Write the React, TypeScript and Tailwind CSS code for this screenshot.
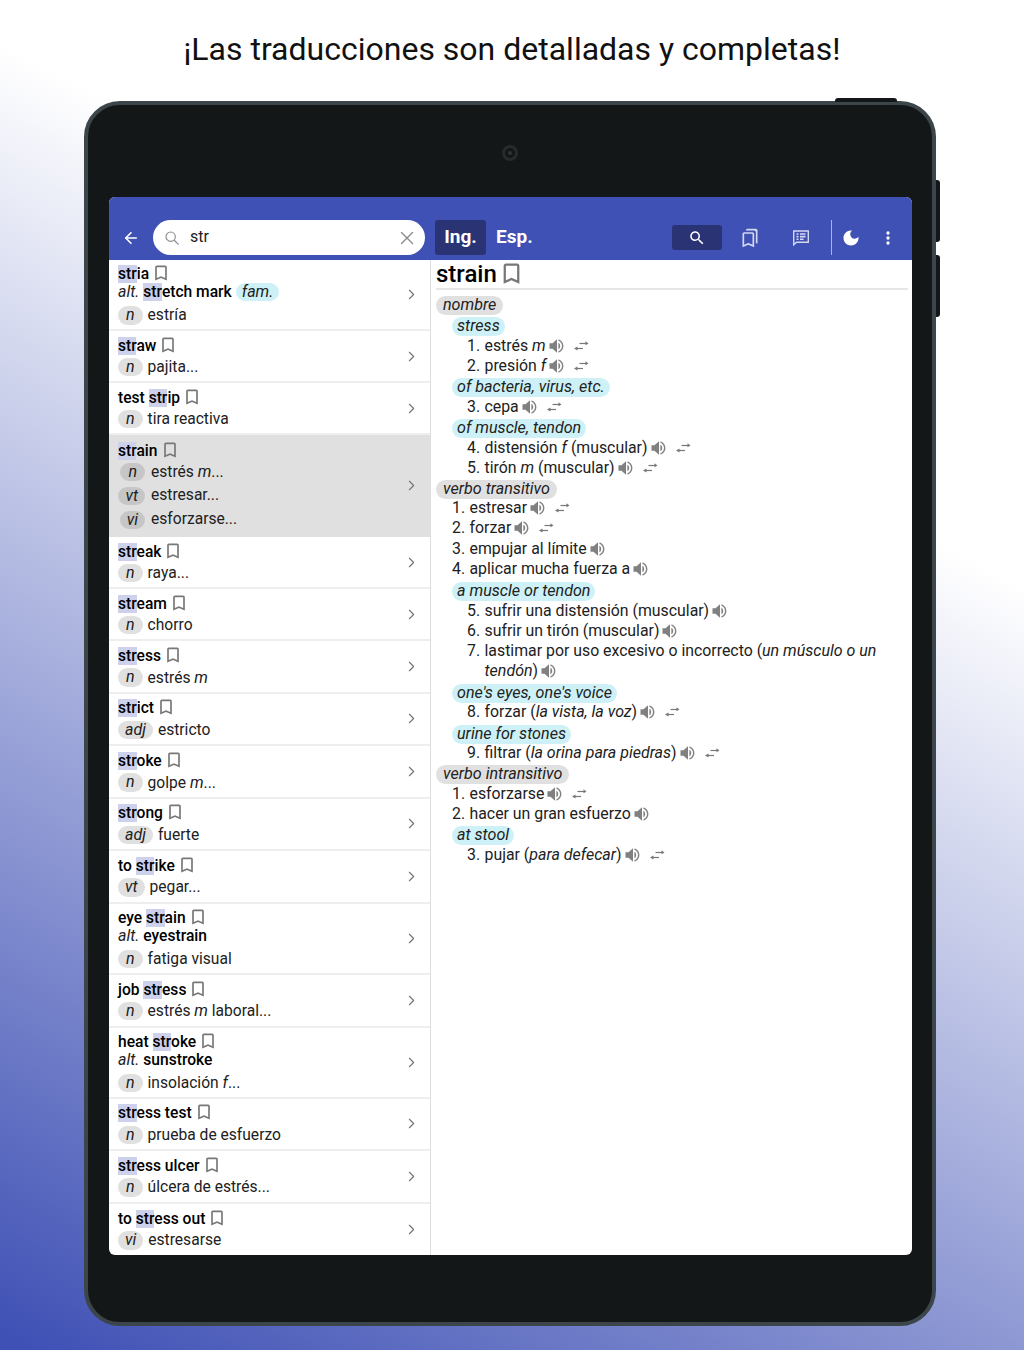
import React from 'react';
import { ArrowLeft, ChevronRight, X } from 'lucide-react';

interface Def {
  pos: string;
  text: React.ReactNode;
}

interface Row {
  before?: string;
  hit: string;
  after?: string;
  alt?: React.ReactNode;
  tag?: string;
  defs: Def[];
  selected?: boolean;
  height: string;
}

const Hl = ({ children }: { children: React.ReactNode }) => (
  <span className="bg-[#cdd1ec]">{children}</span>
);

const Em = ({ children }: { children: React.ReactNode }) => (
  <i className="text-[16px]">{children}</i>
);

const rows: Row[] = [
  { hit: 'str', after: 'ia', alt: <><Hl>str</Hl>etch mark</>, tag: 'fam.', defs: [{ pos: 'n', text: 'estría' }], height: 'h-[71px]' },
  { hit: 'str', after: 'aw', defs: [{ pos: 'n', text: 'pajita...' }], height: 'h-[52px]' },
  { before: 'test ', hit: 'str', after: 'ip', defs: [{ pos: 'n', text: 'tira reactiva' }], height: 'h-[52px]' },
  {
    hit: 'str',
    after: 'ain',
    selected: true,
    defs: [
      { pos: 'n', text: <>estrés <Em>m</Em>...</> },
      { pos: 'vt', text: 'estresar...' },
      { pos: 'vi', text: 'esforzarse...' },
    ],
    height: 'h-[102px]',
  },
  { hit: 'str', after: 'eak', defs: [{ pos: 'n', text: 'raya...' }], height: 'h-[52px]' },
  { hit: 'str', after: 'eam', defs: [{ pos: 'n', text: 'chorro' }], height: 'h-[52px]' },
  { hit: 'str', after: 'ess', defs: [{ pos: 'n', text: <>estrés <Em>m</Em></> }], height: 'h-[52.5px]' },
  { hit: 'str', after: 'ict', defs: [{ pos: 'adj', text: 'estricto' }], height: 'h-[52.5px]' },
  { hit: 'str', after: 'oke', defs: [{ pos: 'n', text: <>golpe <Em>m</Em>...</> }], height: 'h-[52.5px]' },
  { hit: 'str', after: 'ong', defs: [{ pos: 'adj', text: 'fuerte' }], height: 'h-[52.5px]' },
  { before: 'to ', hit: 'str', after: 'ike', defs: [{ pos: 'vt', text: 'pegar...' }], height: 'h-[52.5px]' },
  { before: 'eye ', hit: 'str', after: 'ain', alt: 'eyestrain', defs: [{ pos: 'n', text: 'fatiga visual' }], height: 'h-[71px]' },
  { before: 'job ', hit: 'str', after: 'ess', defs: [{ pos: 'n', text: <>estrés <Em>m</Em> laboral...</> }], height: 'h-[53px]' },
  { before: 'heat ', hit: 'str', after: 'oke', alt: 'sunstroke', defs: [{ pos: 'n', text: <>insolación <Em>f</Em>...</> }], height: 'h-[71px]' },
  { hit: 'str', after: 'ess test', defs: [{ pos: 'n', text: 'prueba de esfuerzo' }], height: 'h-[52.5px]' },
  { hit: 'str', after: 'ess ulcer', defs: [{ pos: 'n', text: 'úlcera de estrés...' }], height: 'h-[52.5px]' },
  { before: 'to ', hit: 'str', after: 'ess out', defs: [{ pos: 'vi', text: 'estresarse' }], height: 'h-[52px]' },
];

function BookmarkIcon({ className }: { className: string }) {
  return (
    <svg viewBox="0 0 24 24" className={className} fill="currentColor">
      <path d="M17 3H7c-1.1 0-2 .9-2 2v16l7-3 7 3V5c0-1.1-.9-2-2-2zm0 15l-5-2.18L7 18V5h10v13z" />
    </svg>
  );
}

function Speaker() {
  return (
    <svg viewBox="0 0 16 16" className="inline-block w-[16px] h-[16px] ml-[3px] align-[-3px] text-[#808080]" fill="currentColor">
      <path d="M0.5 5.2v5.6h3l4.5 4V1.2L3.500 5.200h-3z" />
      <path d="M9.400 4.800c1.100.6 1.800 1.800 1.800 3.200s-.7 2.600-1.800 3.200V4.800z" />
      <path d="M9.400 1.400v1.400c2.100.6 3.600 2.700 3.600 5.200s-1.500 4.600-3.600 5.200v1.400c2.900-.6 5-3.400 5-6.600s-2.100-6-5-6.600z" />
    </svg>
  );
}

function Swap() {
  return (
    <svg viewBox="0 0 16 16" className="inline-block w-4 h-4 align-[-3px] ml-[8px] text-[#777777]" fill="none" stroke="currentColor" strokeWidth="1.2">
      <path d="M6.500 5.500h6.500" />
      <path d="M12.500 3.300l3 2.200-3 1.700z" fill="currentColor" stroke="none" />
      <path d="M10 10.500H4" />
      <path d="M4.500 8.500l-3.500 2 3.500 2z" fill="currentColor" stroke="none" />
    </svg>
  );
}

function Pos({ children }: { children: React.ReactNode }) {
  return (
    <div className="h-[19.9px] pt-[1.4px]">
      <span className="block w-fit h-[19px] leading-[18.5px] rounded-full bg-[#e0e0e0] px-[7px] italic text-[16.100px] text-[#212121]">{children}</span>
    </div>
  );
}

function Sense({ children }: { children: React.ReactNode }) {
  return (
    <div className="h-[20.8px] pl-[16px] pt-[2.4px]">
      <span className="block w-fit h-[19px] leading-[18.5px] rounded-full bg-[#cdf1f6] px-[5px] italic text-[16.100px] text-[#212121]">{children}</span>
    </div>
  );
}

function Item({ n, deep, sound = true, swap, children }: {
  n: number;
  deep?: boolean;
  sound?: boolean;
  swap?: boolean;
  children: React.ReactNode;
}) {
  return (
    <div className={`flex leading-[20.2px] text-[15.85px] text-[#212121] ${deep ? 'pl-[31px]' : 'pl-[16px]'}`}>
      <span className="w-[17.5px] shrink-0">{n}.</span>
      <div>
        {children}
        {sound ? <Speaker /> : null}
        {swap ? <Swap /> : null}
      </div>
    </div>
  );
}

function ListRow({ row }: { row: Row }) {
  const multi = row.defs.length > 1;
  return (
    <div className={`flex items-center pl-[9px] pr-[10px] border-b-2 text-[15.6px] ${row.height} ${row.selected ? 'bg-[#e0e0e0] border-[#e0e0e0]' : 'border-[#eeeeee] last:border-b-0'}`}>
      <div className="flex-1 min-w-0 pt-[1px]">
        <div className="h-[18px] leading-[18px] font-medium text-black whitespace-nowrap">
          {row.before}
          <Hl>{row.hit}</Hl>
          {row.after}
          <BookmarkIcon className="inline-block w-[20px] h-[20px] ml-[2px] align-[-4px] text-[#777777]" />
        </div>
        {row.alt ? (
          <div className="mt-[2px] h-[18px] leading-[18px] whitespace-nowrap font-medium text-black">
            <i className="font-normal text-[16px] text-[#212121]">alt.</i> {row.alt}
            {row.tag ? (
              <span className="inline-block h-[18px] leading-[18px] ml-[4px] px-[6px] rounded-full bg-[#cdf1f6] italic font-normal text-[16px] text-[#212121]">{row.tag}</span>
            ) : null}
          </div>
        ) : null}
        <div className={multi ? 'mt-[2px]' : ''}>
          {row.defs.map((def) => (
            <div key={def.pos} className={`flex items-center text-[#212121] whitespace-nowrap ${multi ? 'h-[24px] pt-[1px]' : 'h-[26px] pt-[4px]'}`}>
              <span className={multi ? 'w-[27px] flex justify-end mr-[6px]' : 'mr-[5px]'}>
                <span className={`inline-block h-[18.5px] leading-[18px] rounded-full italic text-[16px] ${row.selected ? 'bg-[#c6c6c6]' : 'bg-[#e0e0e0]'} ${def.pos === 'n' ? 'px-[8px]' : 'px-[7px]'}`}>{def.pos}</span>
              </span>
              <span>{def.text}</span>
            </div>
          ))}
        </div>
      </div>
      <ChevronRight className="w-[17px] h-[17px] text-[#757575]" strokeWidth={1.6} />
    </div>
  );
}

export default function App() {
  return (
    <div className="relative h-[1350px] w-[1024px] overflow-hidden font-[Roboto,sans-serif] text-[16px] bg-[linear-gradient(28deg,#3f51b5_1%,#ffffff_69%)]">
      <h1 className="pt-[29px] h-[101px] text-center text-[32px] leading-[40px] text-[#111111]">
        ¡Las traducciones son detalladas y completas!
      </h1>

      {/* Tablet */}
      <div className="relative ml-[84px] w-[852px] h-[1225px] rounded-[36px] border-4 border-[#3c4549] bg-[#131718] px-[21px] pt-[92px]">
        <div className="absolute -top-[7px] left-[747px] w-[62px] h-[4px] rounded-t-[3px] bg-[#131718]" />
        <div className="absolute -right-[8px] top-[75px] w-[4px] h-[62px] rounded-r-[3px] bg-[#131718]" />
        <div className="absolute -right-[8px] top-[150px] w-[4px] h-[62px] rounded-r-[3px] bg-[#131718]" />
        <div className="absolute left-[414px] top-[40px] w-[16px] h-[16px] rounded-full border-[3px] border-[#262b2d] flex items-center justify-center">
          <div className="w-[4px] h-[4px] rounded-full bg-[#2f3638]" />
        </div>

        <div className="w-[803px] h-[1058px] rounded-[6px] overflow-hidden bg-white flex flex-col">
          {/* App bar */}
          <div className="h-[63px] shrink-0 bg-[#3f51b5] flex items-end pb-[5px] text-white">
            <div className="w-[44px] h-[35px] flex items-center justify-center">
              <ArrowLeft className="w-[18px] h-[18px]" strokeWidth={2.2} />
            </div>
            <div className="w-[272px] h-[35px] rounded-full bg-white flex items-center pl-[11px] pr-[7px] text-[#212121]">
              <svg viewBox="0 0 24 24" className="w-[16px] h-[16px] text-[#8a8a8a]" fill="none" stroke="currentColor" strokeWidth="1.7">
                <circle cx="10" cy="10" r="7" />
                <path d="M15 15l7 7" />
              </svg>
              <span className="ml-[10px] flex-1 leading-[34px] h-[35px]">str</span>
              <X className="w-[22px] h-[22px] text-[#8a8a8a]" strokeWidth={1.5} />
            </div>
            <div className="ml-[10px] w-[51px] h-[35px] rounded-[3px] bg-[#2a3374] flex items-center justify-center text-[19px] font-bold">Ing.</div>
            <div className="ml-[10px] w-[37px] h-[35px] flex items-center text-[19px] font-bold">Esp.</div>
            <div className="ml-[139px] mb-[5px] w-[50px] h-[25px] rounded-[3px] bg-[#2a3374] flex items-center justify-center">
              <svg viewBox="0 0 24 24" className="w-[18px] h-[18px]" fill="currentColor">
                <path d="M15.5 14h-.79l-.28-.27C15.41 12.59 16 11.11 16 9.5 16 5.91 13.09 3 9.5 3S3 5.91 3 9.5 5.91 16 9.5 16c1.61 0 3.09-.59 4.23-1.57l.27.28v.79l5 4.99L20.49 19l-4.99-5zm-6 0C7.01 14 5 11.99 5 9.5S7.01 5 9.5 5 14 7.01 14 9.5 11.99 14 9.5 14z" />
              </svg>
            </div>
            <div className="ml-[18px] w-[20px] h-[35px] flex items-center justify-center">
              <svg viewBox="0 0 24 24" className="w-[20px] h-[20px] text-[#d5d9f0]" fill="currentColor">
                <path d="M15 7v12.97l-4.21-1.81-.79-.34-.79.34L5 19.97V7h10m4-6H8.99C7.89 1 7 1.9 7 3h10c1.1 0 2 .9 2 2v13l2 1V3c0-1.1-.9-2-2-2zm-4 4H5c-1.1 0-2 .9-2 2v16l7-3 7 3V7c0-1.1-.9-2-2-2z" />
              </svg>
            </div>
            <div className="ml-[31px] w-[20px] h-[35px] flex items-center justify-center">
              <svg viewBox="0 0 20 20" className="w-[20px] h-[20px] text-[#d5d9f0]" fill="none" stroke="currentColor" strokeWidth="1.4">
                <path d="M2.7 3h14.600v11.200H5.600l-2.900 2.600z" />
                <path d="M5.500 6h2M5.500 8.600h2M5.500 11.200h2" strokeWidth="1.6" />
                <path d="M9 6h5.500M9 8.600h5.500M9 11.200h3.500" strokeWidth="1.6" />
              </svg>
            </div>
            <div className="ml-[20px] w-px h-[35px] bg-[#aab2df]" />
            <div className="ml-[8px] w-[22px] h-[35px] flex items-center justify-center">
              <svg viewBox="0 0 24 24" className="w-[20px] h-[20px]" fill="currentColor">
                <path d="M12 3c-4.97 0-9 4.03-9 9s4.03 9 9 9 9-4.03 9-9c0-.46-.04-.92-.1-1.36-.98 1.37-2.58 2.26-4.4 2.26-2.98 0-5.4-2.42-5.4-5.4 0-1.81.89-3.42 2.26-4.4-.44-.06-.9-.1-1.36-.1z" />
              </svg>
            </div>
            <div className="ml-[15px] w-[22px] h-[35px] flex items-center justify-center">
              <svg viewBox="0 0 24 24" className="w-[20px] h-[20px]" fill="currentColor">
                <circle cx="12" cy="6" r="2" />
                <circle cx="12" cy="12" r="2" />
                <circle cx="12" cy="18" r="2" />
              </svg>
            </div>
          </div>

          <div className="flex flex-1 min-h-0">
            {/* Results list */}
            <div className="w-[322px] shrink-0 border-r border-[#dddddd]">
              {rows.map((row) => (
                <ListRow key={`${row.before ?? ''}${row.after}`} row={row} />
              ))}
            </div>

            {/* Entry */}
            <div className="flex-1 pl-[5px] pr-[4px] pt-[1px]">
              <div className="h-[29px] flex items-center border-b-2 border-[#e6e6e6] pb-[2px] text-[24px] font-medium text-black">
                strain
                <BookmarkIcon className="w-[27px] h-[27px] ml-[1px] text-[#777777]" />
              </div>
              <div className="pt-[5px]">
                <Pos>nombre</Pos>
                <Sense>stress</Sense>
                <Item n={1} deep swap>estrés <Em>m</Em></Item>
                <Item n={2} deep swap>presión <Em>f</Em></Item>
                <Sense>of bacteria, virus, etc.</Sense>
                <Item n={3} deep swap>cepa</Item>
                <Sense>of muscle, tendon</Sense>
                <Item n={4} deep swap>distensión <Em>f</Em> (muscular)</Item>
                <Item n={5} deep swap>tirón <Em>m</Em> (muscular)</Item>
                <Pos>verbo transitivo</Pos>
                <Item n={1} swap>estresar</Item>
                <Item n={2} swap>forzar</Item>
                <Item n={3}>empujar al límite</Item>
                <Item n={4}>aplicar mucha fuerza a</Item>
                <div className="h-[1px]" />
                <Sense>a muscle or tendon</Sense>
                <Item n={5} deep>sufrir una distensión (muscular)</Item>
                <Item n={6} deep>sufrir un tirón (muscular)</Item>
                <Item n={7} deep>lastimar por uso excesivo o incorrecto (<Em>un músculo o un tendón</Em>)</Item>
                <Sense>one's eyes, one's voice</Sense>
                <Item n={8} deep swap>forzar (<Em>la vista, la voz</Em>)</Item>
                <Sense>urine for stones</Sense>
                <Item n={9} deep swap>filtrar (<Em>la orina para piedras</Em>)</Item>
                <Pos>verbo intransitivo</Pos>
                <Item n={1} swap>esforzarse</Item>
                <Item n={2}>hacer un gran esfuerzo</Item>
                <Sense>at stool</Sense>
                <Item n={3} deep swap>pujar (<Em>para defecar</Em>)</Item>
              </div>
            </div>
          </div>
        </div>
      </div>
    </div>
  );
}
